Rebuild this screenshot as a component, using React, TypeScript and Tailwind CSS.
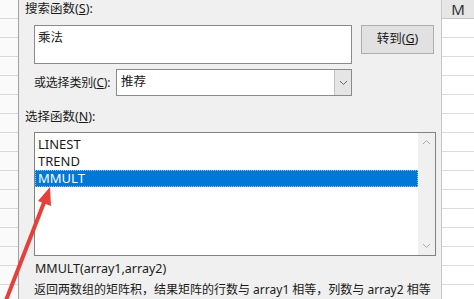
const rows = Array.from({ length: 16 });

const cjk = { fontFamily: '"Noto Sans", "Noto Sans CJK SC", sans-serif' };

export default function App() {
  return (
    <div
      className="relative flex w-[474px] h-[299px] overflow-hidden bg-white text-[12px] text-[#1a1a1a]"
      style={cjk}
    >
      {/* sheet on the left */}
      <div className="w-[19px] shrink-0 flex flex-col border-r border-[#a0a0a0] bg-[#fafafa]">
        {rows.map((_, i) => (
          <div key={i} className="h-[19px] shrink-0 border-b border-[#d8d8d8]" />
        ))}
      </div>

      {/* dialog */}
      <div className="w-[423px] shrink-0 bg-[#f0f0f0] border-r border-[#c8c8c8] pl-[6px]">
        <div className="mt-[1px] h-[16px] leading-[16px] text-[12.5px]">
          搜索函数(<span className="underline">S</span>):
        </div>

        <div className="flex items-start mt-[8px] ml-[9px]">
          <div className="w-[318px] h-[39px] bg-white border border-[#8a8a8a] px-[3px] pt-[4px] leading-[16px] text-[12.5px]">
            乘法
          </div>
          <div className="ml-[9px] w-[73px] h-[29px] bg-[#e1e1e1] border border-[#adadad] flex items-center justify-center text-[12.5px]">
            转到(<span className="underline">G</span>)
          </div>
        </div>

        <div className="flex items-center mt-[5px] ml-[9px] text-[12.5px]">
          <div className="w-[82px] leading-[16px] text-[12px] tracking-[-0.2px] whitespace-nowrap">
            或选择类别(<span className="underline">C</span>):
          </div>
          <div className="flex w-[236px] h-[27px] bg-white border border-[#8a8a8a]">
            <div className="flex-1 px-[4px] flex items-center">推荐</div>
            <div className="w-[17px] bg-[#e5e5e5] border-l border-[#c4c4c4] flex items-center justify-center">
              <svg width="9" height="6" viewBox="0 0 9 6">
                <path d="M1 1 L4.5 4.5 L8 1" fill="none" stroke="#666" strokeWidth="1" />
              </svg>
            </div>
          </div>
        </div>

        <div className="mt-[13px] h-[16px] leading-[16px] text-[12.5px]">
          选择函数(<span className="underline">N</span>):
        </div>

        <div className="mt-[7px] ml-[9px] flex w-[402px] h-[124px] bg-white border border-[#828282]">
          <div className="flex-1 pt-[3px] text-[13px]">
            <div className="h-[17px] leading-[17px] pl-[3px]">LINEST</div>
            <div className="h-[17px] leading-[17px] pl-[3px]">TREND</div>
            <div className="h-[17px] leading-[17px] pl-[3px] bg-[#0078d7] text-white outline-1 outline-dotted outline-[#9cc8f0] -outline-offset-1">
              MMULT
            </div>
          </div>
          <div className="w-[17px] bg-[#f0f0f0] flex flex-col items-center justify-between py-[6px]">
            <svg width="9" height="6" viewBox="0 0 9 6">
              <path d="M1 5 L4.5 1.5 L8 5" fill="none" stroke="#a8a8a8" strokeWidth="1" />
            </svg>
            <svg width="9" height="6" viewBox="0 0 9 6">
              <path d="M1 1 L4.5 4.5 L8 1" fill="none" stroke="#a8a8a8" strokeWidth="1" />
            </svg>
          </div>
        </div>

        <div className="mt-[4px] ml-[10px] h-[17px] leading-[17px] text-[12.5px]">
          MMULT(array1,array2)
        </div>
        <div className="mt-[5px] ml-[9px] leading-[16px] whitespace-nowrap">
          返回两数组的矩阵积，结果矩阵的行数与 array1 相等，列数与 array2 相等
        </div>
      </div>

      {/* sheet on the right */}
      <div className="flex-1 flex flex-col bg-white">
        <div className="h-[19px] shrink-0 bg-[#e6e6e6] border-b border-[#c8c8c8] flex items-center justify-center text-[15px] text-[#333]">
          M
        </div>
        {rows.map((_, i) => (
          <div key={i} className="h-[19px] shrink-0 border-b border-[#dcdcdc]" />
        ))}
      </div>

      {/* red annotation arrow */}
      <svg
        className="absolute left-0 top-0 pointer-events-none"
        width="474"
        height="299"
        viewBox="0 0 474 299"
      >
        <line x1="45" y1="200" x2="3" y2="308" stroke="#e5403a" strokeWidth="4" strokeLinecap="round" />
        <polygon points="50,187 38,201 51,206" fill="#e5403a" />
      </svg>
    </div>
  );
}
